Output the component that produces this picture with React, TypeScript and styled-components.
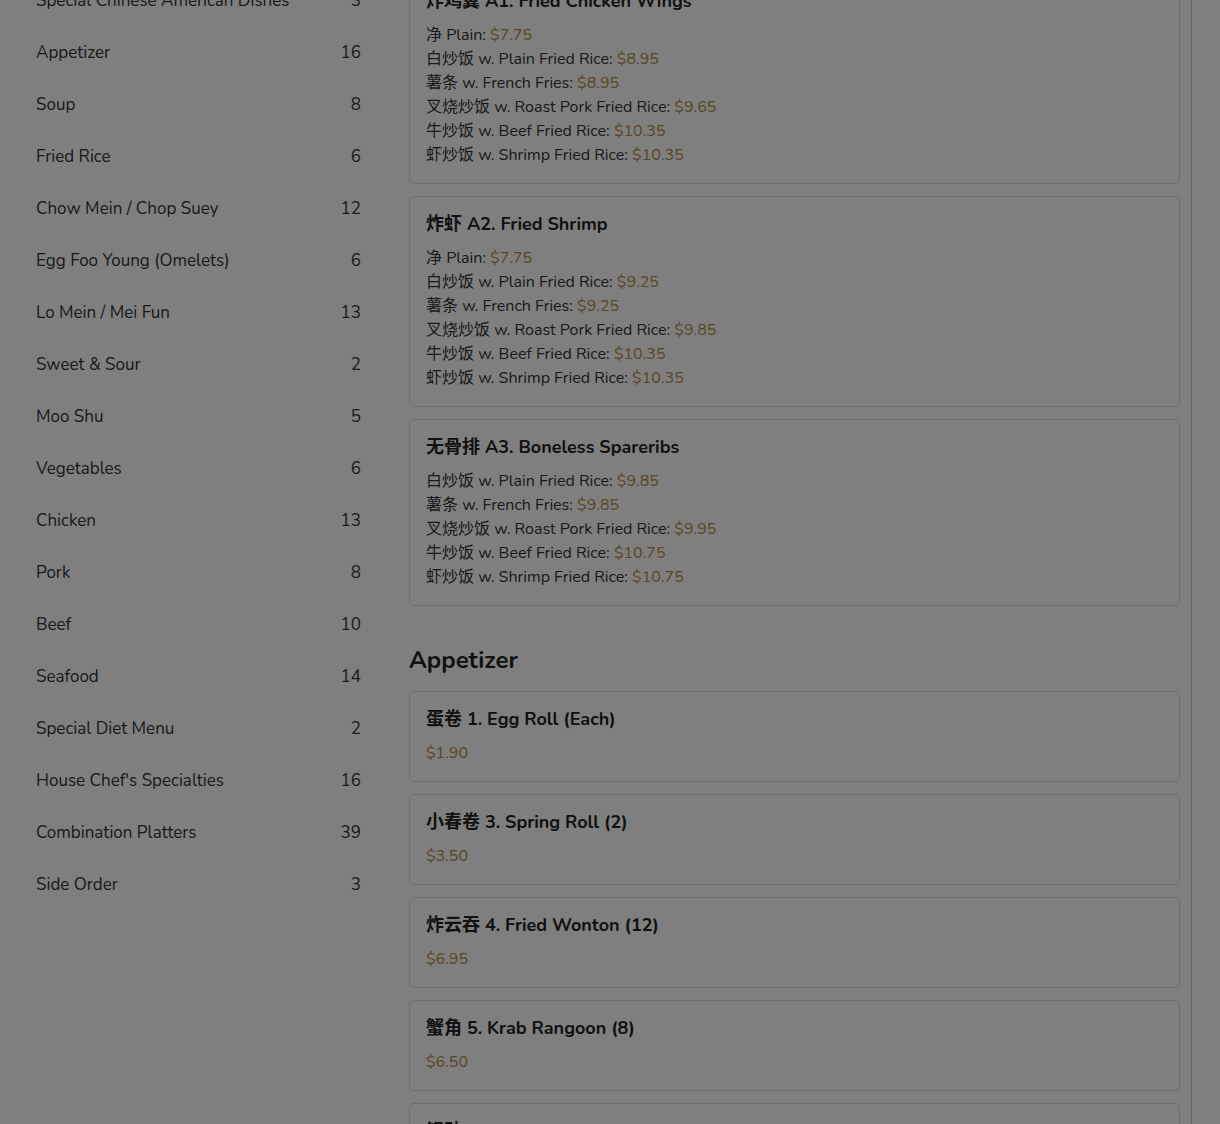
import { type FC } from "react";
import styled, { createGlobalStyle } from "styled-components";

type Option = { zh: string; label: string; price: string };
type Dish = { zh: string; name: string; price?: string; options?: Option[] };
type Section = { title?: string; dishes: Dish[] };

const categories: [string, number][] = [
    ["Special Chinese American Dishes", 3],
    ["Appetizer", 16],
    ["Soup", 8],
    ["Fried Rice", 6],
    ["Chow Mein / Chop Suey", 12],
    ["Egg Foo Young (Omelets)", 6],
    ["Lo Mein / Mei Fun", 13],
    ["Sweet & Sour", 2],
    ["Moo Shu", 5],
    ["Vegetables", 6],
    ["Chicken", 13],
    ["Pork", 8],
    ["Beef", 10],
    ["Seafood", 14],
    ["Special Diet Menu", 2],
    ["House Chef's Specialties", 16],
    ["Combination Platters", 39],
    ["Side Order", 3],
];

const withRice = (plain: string, rice: string, fries: string, pork: string, beef: string, shrimp: string): Option[] => {
    const list: Option[] = [];
    if (plain) list.push({ zh: "净", label: "Plain:", price: plain });
    list.push(
        { zh: "白炒饭", label: "w. Plain Fried Rice:", price: rice },
        { zh: "薯条", label: "w. French Fries:", price: fries },
        { zh: "叉烧炒饭", label: "w. Roast Pork Fried Rice:", price: pork },
        { zh: "牛炒饭", label: "w. Beef Fried Rice:", price: beef },
        { zh: "虾炒饭", label: "w. Shrimp Fried Rice:", price: shrimp },
    );
    return list;
};

const sections: Section[] = [
    {
        dishes: [
            { zh: "炸鸡翼", name: "A1. Fried Chicken Wings", options: withRice("$7.75", "$8.95", "$8.95", "$9.65", "$10.35", "$10.35") },
            { zh: "炸虾", name: "A2. Fried Shrimp", options: withRice("$7.75", "$9.25", "$9.25", "$9.85", "$10.35", "$10.35") },
            { zh: "无骨排", name: "A3. Boneless Spareribs", options: withRice("", "$9.85", "$9.85", "$9.95", "$10.75", "$10.75") },
        ],
    },
    {
        title: "Appetizer",
        dishes: [
            { zh: "蛋卷", name: "1. Egg Roll (Each)", price: "$1.90" },
            { zh: "小春卷", name: "3. Spring Roll (2)", price: "$3.50" },
            { zh: "炸云吞", name: "4. Fried Wonton (12)", price: "$6.95" },
            { zh: "蟹角", name: "5. Krab Rangoon (8)", price: "$6.50" },
            { zh: "锅贴", name: "6. Fried Dumplings (8)", price: "$7.25" },
        ],
    },
];

const App: FC = () => {
    return (
        <>
            <GlobalStyle />
            <Page>
                <Sidebar>
                    {categories.map(([name, count]) => (
                        <CategoryRow key={name}>
                            <span>{name}</span>
                            <Count>{count}</Count>
                        </CategoryRow>
                    ))}
                </Sidebar>
                <Main>
                    {sections.map((section, i) => (
                        <div key={i}>
                            {section.title && <SectionTitle>{section.title}</SectionTitle>}
                            <CardList>
                                {section.dishes.map((dish) => (
                                    <Card key={dish.name}>
                                        <DishName>{dish.zh} {dish.name}</DishName>
                                        {dish.options ? (
                                            dish.options.map((opt) => (
                                                <Line key={opt.label}>
                                                    {opt.zh} {opt.label} <Price>{opt.price}</Price>
                                                </Line>
                                            ))
                                        ) : (
                                            <Line><Price>{dish.price}</Price></Line>
                                        )}
                                    </Card>
                                ))}
                            </CardList>
                        </div>
                    ))}
                </Main>
            </Page>
            <Backdrop />
        </>
    );
};

export default App;

const GlobalStyle = createGlobalStyle`
    html, body {
        margin:0;
        padding:0;
        background:#fff;
        overflow:hidden;
    }
    body {
        font-family: Nunito, Lato, "Noto Sans CJK SC", sans-serif;
        color:#333;
    }
`;

const Page = styled.div`
    display:grid;
    grid-template-columns: 385px 783px;
    column-gap:24px;
    margin-top:-27px;
    height:1200px;
`;

const Sidebar = styled.div`
    padding:1px 24px 0 36px;
`;

const CategoryRow = styled.div`
    height:52px;
    display:flex;
    align-items:center;
    justify-content:space-between;
    font-size:17px;
    color:#333;
`;

const Count = styled.span`
    text-align:right;
`;

const Main = styled.div`
    box-sizing:border-box;
    padding-right:11px;
    border-right:1px solid #c4c4c4;
`;

const SectionTitle = styled.h2`
    margin:40px 0 16px;
    font-size:24px;
    line-height:29px;
    font-weight:700;
    color:#222;
`;

const CardList = styled.div`
    display:flex;
    flex-direction:column;
    gap:12px;
`;

const Card = styled.div`
    border:1px solid #ddd;
    border-radius:5px;
    padding:16px;
    background:#fff;
`;

const DishName = styled.div`
    font-size:18px;
    line-height:22px;
    font-weight:700;
    color:#222;
    margin-bottom:11px;
`;

const Line = styled.div`
    font-size:16px;
    line-height:24px;
    color:#333;
`;

const Price = styled.span`
    color:#b38d45;
`;

const Backdrop = styled.div`
    position:fixed;
    inset:0;
    background:rgba(0,0,0,0.5);
`;
